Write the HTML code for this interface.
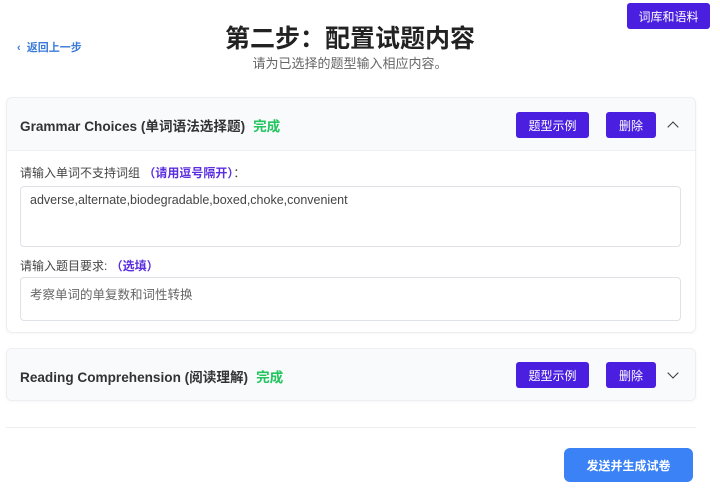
<!DOCTYPE html>
<html><head><meta charset="utf-8"><style>
*{box-sizing:border-box;margin:0;padding:0}
body{width:720px;height:502px;background:#fff;font-family:"Liberation Sans","Noto Sans CJK SC",sans-serif;position:relative;overflow:hidden;color:#222}
.abs{position:absolute}
.pbtn{position:absolute;background:#4a1fe0;color:#fff;font-size:12px;border-radius:3px;display:flex;align-items:center;justify-content:center}
.card{position:absolute;left:6px;width:690px;border:1px solid #eceef2;border-radius:6px;background:#fff;box-shadow:0 1px 3px rgba(0,0,0,.04)}
.hdr{height:53px;background:#f8fafc;border-radius:6px;position:relative}
.ttl{position:absolute;left:13px;font-size:13.6px;font-weight:bold;color:#333}
.ok{color:#22c55e;margin-left:8px}
.ta{position:absolute;left:13px;width:661px;border:1px solid #dfe2e7;border-radius:4px;font-size:12.5px;padding:6px 9px;color:#444}
.lbl{position:absolute;left:13px;font-size:12px;color:#444}
.lbl b{color:#5b2ee0}
.chev{position:absolute;width:8px;height:8px;border-left:1.5px solid #333;border-top:1.5px solid #333}
</style></head><body>
<div class="pbtn" style="left:627px;top:3px;width:83px;height:26px">词库和语料</div>
<div class="abs" style="left:17px;top:39px;font-size:11px;font-weight:bold;color:#3b7bd8">‹&nbsp; 返回上一步</div>
<div class="abs" style="left:0;width:700px;top:19px;text-align:center;font-size:25px;font-weight:bold;color:#222">第二步：配置试题内容</div>
<div class="abs" style="left:0;width:700px;top:53px;text-align:center;font-size:13px;color:#666">请为已选择的题型输入相应内容。</div>

<div class="card" style="top:97px;height:236px">
 <div class="hdr" style="border-bottom:1px solid #eef0f3;border-radius:6px 6px 0 0">
  <div class="ttl" style="top:17px">Grammar Choices (单词语法选择题)<span class="ok">完成</span></div>
  <div class="pbtn" style="left:509px;top:14px;width:73px;height:26px">题型示例</div>
  <div class="pbtn" style="left:599px;top:14px;width:50px;height:26px">删除</div>
  <div class="chev" style="left:662px;top:25px;transform:rotate(45deg)"></div>
 </div>
 <div class="lbl" style="top:66px">请输入单词不支持词组 <b>（请用逗号隔开）</b>：</div>
 <div class="ta" style="top:88px;height:61px">adverse,alternate,biodegradable,boxed,choke,convenient</div>
 <div class="lbl" style="top:159px">请输入题目要求: <b>（选填）</b></div>
 <div class="ta" style="top:179px;height:44px;color:#666">考察单词的单复数和词性转换</div>
</div>

<div class="card" style="top:348px;height:53px">
 <div class="hdr" style="height:51px">
  <div class="ttl" style="top:17px">Reading Comprehension (阅读理解)<span class="ok">完成</span></div>
  <div class="pbtn" style="left:509px;top:13px;width:73px;height:26px">题型示例</div>
  <div class="pbtn" style="left:599px;top:13px;width:50px;height:26px">删除</div>
  <div class="chev" style="left:662px;top:20px;transform:rotate(225deg)"></div>
 </div>
</div>
<div class="abs" style="left:6px;width:690px;top:427px;border-top:1px solid #eceef2"></div>
<div class="abs" style="left:564px;top:448px;width:129px;height:34px;background:#3b82f6;border-radius:6px;color:#fff;font-size:12px;font-weight:bold;display:flex;align-items:center;justify-content:center">发送并生成试卷</div>
</body></html>
